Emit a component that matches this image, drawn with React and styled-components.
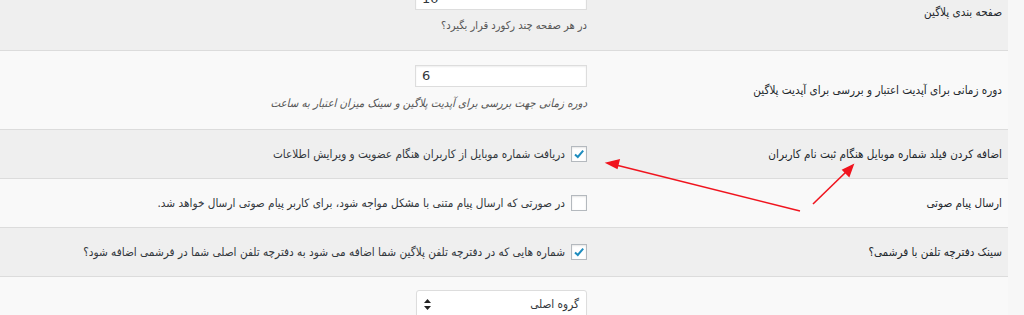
import React from "react";
import styled, { createGlobalStyle } from "styled-components";

const GlobalStyle = createGlobalStyle`
  html, body {
    margin: 0;
    padding: 0;
    background: #f7f7f7;
  }
  body {
    font-family: "DejaVu Sans Condensed", "DejaVu Sans", sans-serif;
    font-size: 12px;
    color: #23282d;
  }
`;

const Viewport = styled.div`
  position: relative;
  width: 1024px;
  height: 315px;
  overflow: hidden;
  direction: rtl;
  padding-right: 16px;
  box-sizing: border-box;
`;

const FormTable = styled.div`
  width: 1008px;
  margin-top: -26px;
  display: flex;
  flex-direction: column;
`;

const Row = styled.div`
  display: flex;
  align-items: center;
  background: ${(p) => (p.$alt ? "#efefef" : "#f9f9f9")};
  border-bottom: 1px solid #dcdcdc;
`;

const Label = styled.div`
  width: 411px;
  flex-shrink: 0;
  box-sizing: border-box;
  padding-right: 6px;
  line-height: 18px;
  font-size: 11.6px;
  color: #23282d;
  white-space: nowrap;
`;

const Field = styled.div`
  flex: 1;
  padding: ${(p) => p.$pad || "15px 10px"};
  display: flex;
  flex-direction: column;
  align-items: flex-start;
`;

const TextInput = styled.div`
  width: 172px;
  height: 22px;
  box-sizing: border-box;
  background: #fff;
  border: 1px solid #ddd;
  box-shadow: inset 0 1px 2px rgba(0, 0, 0, 0.07);
  direction: ltr;
  text-align: left;
  padding: 0 6px;
  font-family: "DejaVu Sans", sans-serif;
  font-size: 13px;
  line-height: 20px;
  color: #32373c;
`;

const Description = styled.p`
  margin: 8px 0 0;
  line-height: 16px;
  font-size: ${(p) => (p.$italic ? "11.4px" : "11px")};
  color: #555;
  white-space: nowrap;
  font-style: ${(p) => (p.$italic ? "italic" : "normal")};
`;

const CheckLine = styled.div`
  display: flex;
  align-items: center;
  gap: 6px;
  line-height: 18px;
  font-size: 11.7px;
  color: #32373c;
  white-space: nowrap;
`;

const Box = styled.span`
  width: 16px;
  height: 16px;
  box-sizing: border-box;
  flex-shrink: 0;
  background: #fff;
  border: 1px solid #b4b9be;
  box-shadow: inset 0 1px 2px rgba(0, 0, 0, 0.1);
  display: flex;
  align-items: center;
  justify-content: center;
`;

const Select = styled.div`
  width: 171px;
  height: 28px;
  box-sizing: border-box;
  background: #fff;
  border: 1px solid #ddd;
  border-radius: 3px;
  box-shadow: 0 1px 1px rgba(0, 0, 0, 0.04);
  display: flex;
  align-items: center;
  justify-content: space-between;
  padding: 0 7px 0 7px;
  font-size: 11.7px;
  color: #32373c;
`;

const Arrows = styled.svg`
  position: absolute;
  inset: 0;
  pointer-events: none;
`;

function Checkbox({ checked }) {
  return (
    <Box>
      {checked && (
        <svg width="12" height="12" viewBox="0 0 12 12">
          <path d="M2 6.4 L4.8 9 L10.2 2.6" fill="none" stroke="#1e8cbe" strokeWidth="2" />
        </svg>
      )}
    </Box>
  );
}

function UpDown() {
  return (
    <svg width="7" height="11" viewBox="0 0 7 11">
      <path d="M3.5 0 L7 4 L0 4 Z M3.5 11 L7 7 L0 7 Z" fill="#222" />
    </svg>
  );
}

export default function App() {
  return (
    <Viewport>
      <GlobalStyle />
      <FormTable>
        <Row $alt>
          <Label>صفحه بندی پلاگین</Label>
          <Field $pad="14px 10px 16px">
            <TextInput>10</TextInput>
            <Description>در هر صفحه چند رکورد قرار بگیرد؟</Description>
          </Field>
        </Row>
        <Row>
          <Label>دوره زمانی برای آپدیت اعتبار و بررسی برای آپدیت پلاگین</Label>
          <Field $pad="14px 10px 18px">
            <TextInput>6</TextInput>
            <Description $italic>
              دوره زمانی جهت بررسی برای آپدیت پلاگین و سینک میزان اعتبار به ساعت
            </Description>
          </Field>
        </Row>
        <Row $alt>
          <Label>اضافه کردن فیلد شماره موبایل هنگام ثبت نام کاربران</Label>
          <Field>
            <CheckLine>
              <Checkbox checked />
              دریافت شماره موبایل از کاربران هنگام عضویت و ویرایش اطلاعات
            </CheckLine>
          </Field>
        </Row>
        <Row>
          <Label>ارسال پیام صوتی</Label>
          <Field>
            <CheckLine>
              <Checkbox />
              در صورتی که ارسال پیام متنی با مشکل مواجه شود، برای کاربر پیام صوتی ارسال خواهد شد.
            </CheckLine>
          </Field>
        </Row>
        <Row $alt>
          <Label>سینک دفترچه تلفن با فرشمی؟</Label>
          <Field>
            <CheckLine>
              <Checkbox checked />
              شماره هایی که در دفترچه تلفن پلاگین شما اضافه می شود به دفترچه تلفن اصلی شما در فرشمی اضافه شود؟
            </CheckLine>
          </Field>
        </Row>
        <Row>
          <Label />
          <Field $pad="13px 10px 14px">
            <Select>
              <span>گروه اصلی</span>
              <UpDown />
            </Select>
          </Field>
        </Row>
      </FormTable>
      <Arrows width="1024" height="315" viewBox="0 0 1024 315">
        <g stroke="#f0141e" strokeWidth="1.6" fill="#f0141e">
          <line x1="800" y1="211" x2="616" y2="165" />
          <path d="M607 163 L619 160 L617 168 Z" />
          <line x1="813" y1="204" x2="847" y2="171" />
          <path d="M853 165 L849 176 L843 170 Z" />
        </g>
      </Arrows>
    </Viewport>
  );
}
